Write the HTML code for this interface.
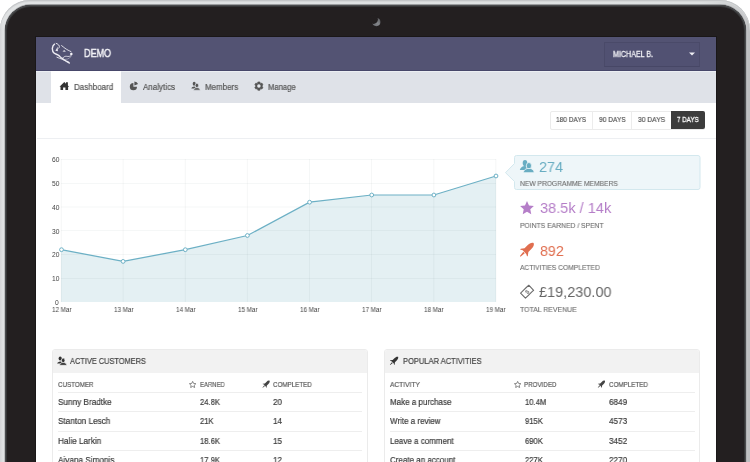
<!DOCTYPE html>
<html><head><meta charset="utf-8">
<style>
*{margin:0;padding:0;box-sizing:border-box}
html,body{width:750px;height:462px;overflow:hidden;background:#fff;font-family:"Liberation Sans",sans-serif}
.a{position:absolute}
.t{position:absolute;white-space:nowrap;line-height:1;transform-origin:0 0;will-change:transform;-webkit-text-stroke:0.2px currentColor}
#dev{left:0;top:0;width:750px;height:700px;border-radius:30px;background:linear-gradient(90deg,#d3d4d6 0,#e0e2e3 3px,#dde0e1 700px,#c8c9cb 746px,#bdbec0 748px);box-shadow:inset 0 1px 0 #c4c6c8,inset 0 2px 0 #d5d7d8}
#bez{left:5px;top:5px;width:741px;height:690px;border-radius:26px;background:#231f20;box-shadow:0 -0.5px 0 0.5px #9a9c9e,inset 0 0 0 1px #4a4b4d,inset 0 0 0 2px #343435}
#scr{left:36px;top:37px;width:680px;height:430px;background:#fff;box-shadow:0 0 0 1px #1a1718}
.nav{color:#555;font-size:8.8px}
.btn{color:#555;font-size:8.1px}
.yl{color:#444;font-size:6.7px;-webkit-text-stroke:0}
.xl{color:#444;font-size:6.7px;-webkit-text-stroke:0}
.big{font-size:15px;-webkit-text-stroke:0}
.lbl{color:#6e6e6e;font-size:7.3px;-webkit-text-stroke:0.12px currentColor}
.ph{color:#444;font-size:8.85px}
.th{color:#5a5a5a;font-size:7.8px}
.td{color:#3a3a3a;font-size:9.1px}
</style></head><body>
<div id="dev" class="a"></div>
<div id="bez" class="a"></div>
<svg class="a" style="left:370px;top:15px" width="14" height="14" viewBox="0 0 14 14"><defs><linearGradient id="cg" x1="0" y1="1" x2="1" y2="0"><stop offset="0" stop-color="#606268"/><stop offset="0.5" stop-color="#85878b"/><stop offset="1" stop-color="#56575a"/></linearGradient><filter id="cb" color-interpolation-filters="sRGB"><feGaussianBlur stdDeviation="0.6"/></filter></defs><g filter="url(#cb)"><circle cx="6.3" cy="7.1" r="4.1" fill="url(#cg)"/><circle cx="3.5" cy="4.5" r="4.4" fill="#231f20"/></g></svg>
<div id="scr" class="a"></div>

<!-- header -->
<div class="a" style="left:36px;top:37px;width:680px;height:34px;background:#535373;border-bottom:1px solid #47476a"></div>
<svg class="a" style="left:50px;top:42px" width="25" height="24" viewBox="0 0 25 24">
 <g fill="none" stroke="#ecebf2" stroke-linecap="round" stroke-linejoin="round">
  <path d="M4.5 2.2 C3.3 3 2.5 4.6 2.3 6.6 C2.3 8.6 2.9 10.2 4.2 11.2 C5.5 12 7.4 12.6 8.6 13.4 C9.6 14.1 10.6 15.3 12.1 16.4 C13.6 17.6 15.2 18.6 16.8 19.5 C17.8 20 18.6 20.4 19.3 21" stroke-width="1.4"/>
  <path d="M6.9 15.2 C8.4 15.8 10.5 16.8 12.1 17.2 C13.6 17.8 15 18.6 16.3 19.2" stroke-width="0.9"/>
  <path d="M6.2 1.4 C7.4 1.8 8.6 2.6 9.2 3.8 C9.6 4.8 9.3 5.6 8.7 6.2" stroke-width="1"/>
  <path d="M11.6 3.6 C12.8 4.5 13.9 5.4 14.9 6.2 C16 7 17 7.6 18.1 8.2 C19.1 8.7 20.1 9.1 21 9.6" stroke-width="0.9"/>
  <path d="M12.7 16.1 C13.3 15.3 14 14.7 14.8 14.5 C15.5 14.2 16.2 14.2 16.8 14.3 C17.5 14.4 18.2 14.6 19.2 14.4 C20.2 14.2 20.9 13.6 21.5 13" stroke-width="0.8"/>
  <path d="M15.4 17.4 C16.8 17.3 18.3 16.9 19.6 16 C20.4 15.4 20.8 14.8 21.1 14.2" stroke-width="0.6" stroke-opacity="0.7"/>
 </g>
 <path d="M7.6 4.8 L5.4 8.7 L7.9 9.2 Z" fill="#ecebf2"/>
 <path d="M12.5 9.6 L14.2 8.1 L15.9 9.7 Z" fill="#ecebf2"/>
 <circle cx="21.3" cy="12.1" r="1.25" fill="#f4f3f8"/>
</svg>
<div class="t" style="left:84px;top:47.8px;font-size:11.3px;font-weight:400;-webkit-text-stroke:0.5px #f2f2f6;color:#f2f2f6;transform:scaleX(0.80)">DEMO</div>
<div class="a" style="left:604.3px;top:42.3px;width:96px;height:24.7px;background:#515172;border:1px solid #4a4a69;border-bottom-color:#474766"></div>
<div class="t" style="left:613px;top:49.9px;font-size:8.4px;color:#eeeef3;-webkit-text-stroke:0.3px #eeeef3;transform:scaleX(0.85)">MICHAEL B.</div>
<svg class="a" style="left:689px;top:52px" width="6" height="4" viewBox="0 0 6 4"><path d="M0 0.5H6L3 3.5Z" fill="#eeeef3"/></svg>

<!-- nav -->
<div class="a" style="left:36px;top:71px;width:680px;height:31.5px;background:#dfe2e8;border-top:1px solid #eceff3"></div>
<div class="a" style="left:51.3px;top:71px;width:69.7px;height:32px;background:#fff"></div>
<svg class="a" style="left:56px;top:78px" width="18" height="16" viewBox="0 0 18 16"><path d="M3.5 8.7 L8.3 4.1 L10 5.7 L10 4.3 L11.9 4.3 L11.9 7.5 L13.2 8.7 L12.1 8.7 L12.1 11.9 L9.4 11.9 L9.4 9.6 L7.1 9.6 L7.1 11.9 L4.5 11.9 L4.5 8.7 Z" fill="#333"/></svg>
<div class="t nav" style="left:73.5px;top:82.9px;transform:scaleX(0.91)">Dashboard</div>
<svg class="a" style="left:125px;top:78px" width="18" height="16" viewBox="0 0 18 16"><path d="M8.4 8.7 L8.4 5.1 A3.6 3.6 0 1 0 12.0 8.7 Z" fill="#555"/><path d="M9.4 7.4 L9.40 3.50 A3.9 3.9 0 0 1 13.06 6.07 Z" fill="#555"/></svg>
<div class="t nav" style="left:143px;top:82.9px;transform:scaleX(0.91)">Analytics</div>
<svg class="a" style="left:186px;top:78px" width="18" height="16" viewBox="0 0 18 16">
 <ellipse cx="8.2" cy="5.7" rx="1.5" ry="2" fill="#555"/>
 <path d="M5.3 10.4 C5.6 9.3 6.8 8.6 8.4 8.5 L9.5 9 L9.5 10.4 Z" fill="#555"/>
 <g fill="#555" stroke="#dfe2e8" stroke-width="0.7">
 <ellipse cx="10.9" cy="7.4" rx="1.7" ry="2.2"/>
 <path d="M7.6 12.2 C7.8 10.6 9 9.8 10.3 9.7 L11.6 9.7 C12.9 9.8 14 10.6 14.2 12.2 Z"/>
 </g>
</svg>
<div class="t nav" style="left:205px;top:82.9px;transform:scaleX(0.905)">Members</div>
<svg class="a" style="left:250px;top:78px" width="18" height="16" viewBox="0 0 18 16"><g transform="translate(8.9 8.1)"><path d="M-1.04 -4.17 L1.04 -4.17 L1.35 -2.90 L1.84 -2.62 L3.09 -2.99 L4.13 -1.19 L3.19 -0.28 L3.19 0.28 L4.13 1.19 L3.09 2.99 L1.84 2.62 L1.35 2.90 L1.04 4.17 L-1.04 4.17 L-1.35 2.90 L-1.84 2.62 L-3.09 2.99 L-4.13 1.19 L-3.19 0.28 L-3.19 -0.28 L-4.13 -1.19 L-3.09 -2.99 L-1.84 -2.62 L-1.35 -2.90Z" fill="#555" stroke="#555" stroke-width="0.6" stroke-linejoin="round"/><circle r="1.75" fill="#e6e9ee"/></g></svg>
<div class="t nav" style="left:268.3px;top:82.9px;transform:scaleX(0.87)">Manage</div>

<!-- divider -->
<div class="a" style="left:37px;top:138px;width:679px;height:1px;background:#edeff2"></div>

<!-- day buttons -->
<div class="a" style="left:550px;top:110.5px;width:155px;height:19px;border:1px solid #ebebeb;border-radius:2px;background:#fff"></div>
<div class="a" style="left:592px;top:111px;width:1px;height:18px;background:#ececec"></div>
<div class="a" style="left:631px;top:111px;width:1px;height:18px;background:#ececec"></div>
<div class="a" style="left:671px;top:111px;width:34px;height:18px;background:#3c3c3c;border-radius:0 2px 2px 0"></div>
<div class="t btn" style="left:556.4px;top:115.7px;transform:scaleX(0.81)">180 DAYS</div>
<div class="t btn" style="left:599px;top:115.7px;transform:scaleX(0.82)">90 DAYS</div>
<div class="t btn" style="left:638px;top:115.7px;transform:scaleX(0.83)">30 DAYS</div>
<div class="t btn" style="left:677px;top:115.7px;color:#fff;font-weight:400;-webkit-text-stroke:0.3px #fff;transform:scaleX(0.77)">7 DAYS</div>

<!-- chart -->
<svg class="a" style="left:0;top:0" width="750" height="462">
 <path d="M61 249.7 L123.1 261.4 L185.3 249.7 L247.4 235.5 L309.6 202.2 L371.7 195 L433.9 195 L496 176 L496 302 L61 302 Z" fill="#e4f0f3"/>
 <g stroke="rgba(0,40,60,0.04)" stroke-width="1">
  <path d="M61 159.5H496M61 183.5H496M61 207H496M61 230.5H496M61 254.5H496M61 278.5H496"/>
  <path d="M61.3 159V302M123.2 159V302M185.3 159V302M247.4 159V302M309.5 159V302M371.6 159V302M433.8 159V302M495.8 159V302"/>
 </g>
 <path d="M61 249.7 L123.1 261.4 L185.3 249.7 L247.4 235.5 L309.6 202.2 L371.7 195 L433.9 195 L496 176" fill="none" stroke="#6cb0c5" stroke-width="1.2"/>
 <g fill="#fff" stroke="#6cb0c5" stroke-width="1">
  <circle cx="61.5" cy="249.7" r="1.9"/><circle cx="123.1" cy="261.4" r="1.9"/><circle cx="185.3" cy="249.7" r="1.9"/><circle cx="247.4" cy="235.5" r="1.9"/><circle cx="309.6" cy="202.2" r="1.9"/><circle cx="371.7" cy="195" r="1.9"/><circle cx="433.9" cy="195" r="1.9"/><circle cx="496" cy="176" r="1.9"/>
 </g>
</svg>
<div class="t yl" style="left:51.5px;top:157.4px">60</div>
<div class="t yl" style="left:51.5px;top:181.2px">50</div>
<div class="t yl" style="left:51.5px;top:204.9px">40</div>
<div class="t yl" style="left:51.5px;top:228.7px">30</div>
<div class="t yl" style="left:51.5px;top:252.4px">20</div>
<div class="t yl" style="left:51.5px;top:276.2px">10</div>
<div class="t yl" style="left:54.5px;top:299.9px">0</div>
<div class="t xl" style="left:51.6px;top:307.2px;transform:scaleX(0.94)">12 Mar</div>
<div class="t xl" style="left:113.6px;top:307.2px;transform:scaleX(0.94)">13 Mar</div>
<div class="t xl" style="left:175.6px;top:307.2px;transform:scaleX(0.94)">14 Mar</div>
<div class="t xl" style="left:237.6px;top:307.2px;transform:scaleX(0.94)">15 Mar</div>
<div class="t xl" style="left:299.6px;top:307.2px;transform:scaleX(0.94)">16 Mar</div>
<div class="t xl" style="left:361.6px;top:307.2px;transform:scaleX(0.94)">17 Mar</div>
<div class="t xl" style="left:423.6px;top:307.2px;transform:scaleX(0.94)">18 Mar</div>
<div class="t xl" style="left:485.6px;top:307.2px;transform:scaleX(0.94)">19 Mar</div>

<!-- callout -->
<svg class="a" style="left:504px;top:154px" width="198" height="38" viewBox="0 0 198 38">
 <path d="M12.5 1.5 H194 A2 2 0 0 1 196 3.5 V33.5 A2 2 0 0 1 194 35.5 H12.5 A2 2 0 0 1 10.5 33.5 V27.5 L1.5 18.7 L10.5 9.5 V3.5 A2 2 0 0 1 12.5 1.5 Z" fill="#eef6f9" stroke="#d3e8ee" stroke-width="1"/>
</svg>
<svg class="a" style="left:517px;top:157px" width="20" height="18" viewBox="0 0 20 18">
 <ellipse cx="8" cy="6" rx="2.3" ry="3.1" fill="#68adc2"/>
 <path d="M2.8 13.1 C3.1 11 4.9 9.5 7.3 9 L9.8 9.2 L9.8 13.1 Z" fill="#68adc2"/>
 <g fill="#68adc2" stroke="#eef6f9" stroke-width="0.8">
 <ellipse cx="11.9" cy="8.8" rx="2.6" ry="3.3"/>
 <path d="M6.3 15.7 C6.5 13.3 8.4 11.9 10.4 11.5 L13.4 11.5 C15.4 11.9 17 13.3 17.2 15.7 Z"/>
 </g>
</svg>
<div class="t big" style="left:539px;top:159.2px;color:#68adc2;transform:scaleX(0.96)">274</div>
<div class="t lbl" style="left:520px;top:180.1px;transform:scaleX(0.918)">NEW PROGRAMME MEMBERS</div>

<svg class="a" style="left:520px;top:201px" width="14" height="14" viewBox="0.4 0.4 13.2 13.2"><path d="M7 0.5 L8.9 4.6 L13.5 5.1 L10.1 8.2 L11 12.8 L7 10.5 L3 12.8 L3.9 8.2 L0.5 5.1 L5.1 4.6 Z" fill="#b57ec8"/></svg>
<div class="t big" style="left:539.5px;top:200.4px;color:#b57ec8;transform:scaleX(0.97)">38.5k / 14k</div>
<div class="t lbl" style="left:520px;top:222px;transform:scaleX(0.929)">POINTS EARNED / SPENT</div>

<svg class="a" style="left:517px;top:240px" width="20" height="18" viewBox="0 0 20 18"><g transform="translate(10.3 9.3) rotate(45)" fill="#e06e4f"><path d="M0 -9 C2 -8 2.7 -6 2.7 -3 L2.7 1.2 L5 4.2 L5 5.3 L2.5 4 L-2.5 4 L-5 5.3 L-5 4.2 L-2.7 1.2 L-2.7 -3 C-2.7 -6 -2 -8 0 -9 Z M-1 4.6 L1 4.6 L0.4 10 L-0.4 10 Z"/></g></svg>
<div class="t big" style="left:539.8px;top:243.4px;color:#e06e4f;transform:scaleX(0.95)">892</div>
<div class="t lbl" style="left:520px;top:264px;transform:scaleX(0.915)">ACTIVITIES COMPLETED</div>

<svg class="a" style="left:517px;top:282px" width="20" height="18" viewBox="0 0 20 18"><g transform="translate(10.1 9.7) rotate(-44)"><path d="M-5.7 -3.5 C-3 -3.1 0 -3.9 5.7 -3.5 L5.7 3.5 C3 3.1 0 3.9 -5.7 3.5 Z" fill="none" stroke="#6a6a6a" stroke-width="1.1" stroke-linejoin="round"/><text x="0" y="2.2" font-size="6" fill="#7a7a7a" text-anchor="middle" font-family="Liberation Sans" font-weight="700">$</text></g></svg>
<div class="t big" style="left:539.4px;top:284.2px;color:#666;transform:scaleX(0.965)">£19,230.00</div>
<div class="t lbl" style="left:520px;top:305.8px;transform:scaleX(0.948)">TOTAL REVENUE</div>

<!-- panel 1 -->
<div class="a" style="left:52px;top:349px;width:316px;height:120px;border:1px solid #ebebeb;border-radius:3px;background:#fff"></div>
<div class="a" style="left:53px;top:350px;width:314px;height:23px;background:#f2f2f2;border-radius:2px 2px 0 0"></div>
<svg class="a" style="left:52px;top:351px" width="18" height="16" viewBox="0 0 18 16">
 <ellipse cx="8.2" cy="7.5" rx="1.6" ry="2.1" fill="#333"/>
 <path d="M5.1 12.6 C5.4 11.4 6.7 10.6 8.4 10.5 L9.6 11 L9.6 12.6 Z" fill="#333"/>
 <g fill="#333" stroke="#f2f2f2" stroke-width="0.7">
 <ellipse cx="11.2" cy="9.4" rx="1.8" ry="2.3"/>
 <path d="M7.6 14.3 C7.8 12.6 9.1 11.7 10.5 11.6 L11.9 11.6 C13.3 11.7 14.6 12.6 14.8 14.3 Z"/>
 </g>
</svg>
<div class="t ph" style="left:70px;top:357.1px;transform:scaleX(0.837)">ACTIVE CUSTOMERS</div>
<div class="t th" style="left:58px;top:380.7px;transform:scaleX(0.80)">CUSTOMER</div>
<svg class="a" style="left:189px;top:380.5px" width="7.3" height="7.3" viewBox="0 0 14 14"><path d="M7 0.8 L8.9 4.7 L13.2 5.2 L10 8.2 L10.8 12.5 L7 10.4 L3.2 12.5 L4 8.2 L0.8 5.2 L5.1 4.7 Z" fill="none" stroke="#555" stroke-width="1.3"/></svg>
<div class="t th" style="left:200px;top:380.7px;transform:scaleX(0.763)">EARNED</div>
<svg class="a" style="left:0;top:0;overflow:visible" width="1" height="1"><g transform="translate(266.3 384.0) scale(0.52) rotate(45)" fill="#444"><path d="M0 -9 C2 -8 2.7 -6 2.7 -3 L2.7 1.2 L5 4.2 L5 5.3 L2.5 4 L-2.5 4 L-5 5.3 L-5 4.2 L-2.7 1.2 L-2.7 -3 C-2.7 -6 -2 -8 0 -9 Z M-1 4.6 L1 4.6 L0.4 10 L-0.4 10 Z"/></g></svg>
<div class="t th" style="left:272.8px;top:380.7px;transform:scaleX(0.797)">COMPLETED</div>
<div class="a" style="left:58px;top:392px;width:304px;height:1px;background:#eeeeee"></div>
<div class="a" style="left:58px;top:411px;width:304px;height:1px;background:#eeeeee"></div>
<div class="a" style="left:58px;top:431px;width:304px;height:1px;background:#eeeeee"></div>
<div class="a" style="left:58px;top:450px;width:304px;height:1px;background:#eeeeee"></div>
<div class="t td" style="left:58px;top:397.9px;transform:scaleX(0.9)">Sunny Bradtke</div>
<div class="t td" style="left:58px;top:417.2px;transform:scaleX(0.9)">Stanton Lesch</div>
<div class="t td" style="left:58px;top:436.5px;transform:scaleX(0.9)">Halie Larkin</div>
<div class="t td" style="left:58px;top:455.7px;transform:scaleX(0.9)">Aiyana Simonis</div>
<div class="t td" style="left:200px;top:397.9px;transform:scaleX(0.84)">24.8K</div>
<div class="t td" style="left:200px;top:417.2px;transform:scaleX(0.84)">21K</div>
<div class="t td" style="left:200px;top:436.5px;transform:scaleX(0.84)">18.6K</div>
<div class="t td" style="left:200px;top:455.7px;transform:scaleX(0.84)">17.9K</div>
<div class="t td" style="left:273px;top:397.9px;transform:scaleX(0.9)">20</div>
<div class="t td" style="left:273px;top:417.2px;transform:scaleX(0.9)">14</div>
<div class="t td" style="left:273px;top:436.5px;transform:scaleX(0.9)">15</div>
<div class="t td" style="left:273px;top:455.7px;transform:scaleX(0.9)">12</div>

<!-- panel 2 -->
<div class="a" style="left:384px;top:349px;width:316px;height:120px;border:1px solid #ebebeb;border-radius:3px;background:#fff"></div>
<div class="a" style="left:385px;top:350px;width:314px;height:23px;background:#f2f2f2;border-radius:2px 2px 0 0"></div>
<svg class="a" style="left:0;top:0;overflow:visible" width="1" height="1"><g transform="translate(394.3 360.6) scale(0.6) rotate(45)" fill="#333"><path d="M0 -9 C2 -8 2.7 -6 2.7 -3 L2.7 1.2 L5 4.2 L5 5.3 L2.5 4 L-2.5 4 L-5 5.3 L-5 4.2 L-2.7 1.2 L-2.7 -3 C-2.7 -6 -2 -8 0 -9 Z M-1 4.6 L1 4.6 L0.4 10 L-0.4 10 Z"/></g></svg>
<div class="t ph" style="left:402.5px;top:357.1px;transform:scaleX(0.851)">POPULAR ACTIVITIES</div>
<div class="t th" style="left:390.2px;top:380.7px;transform:scaleX(0.85)">ACTIVITY</div>
<svg class="a" style="left:514px;top:380.5px" width="7.3" height="7.3" viewBox="0 0 14 14"><path d="M7 0.8 L8.9 4.7 L13.2 5.2 L10 8.2 L10.8 12.5 L7 10.4 L3.2 12.5 L4 8.2 L0.8 5.2 L5.1 4.7 Z" fill="none" stroke="#555" stroke-width="1.3"/></svg>
<div class="t th" style="left:524.4px;top:380.7px;transform:scaleX(0.795)">PROVIDED</div>
<svg class="a" style="left:0;top:0;overflow:visible" width="1" height="1"><g transform="translate(601.6 384.0) scale(0.52) rotate(45)" fill="#444"><path d="M0 -9 C2 -8 2.7 -6 2.7 -3 L2.7 1.2 L5 4.2 L5 5.3 L2.5 4 L-2.5 4 L-5 5.3 L-5 4.2 L-2.7 1.2 L-2.7 -3 C-2.7 -6 -2 -8 0 -9 Z M-1 4.6 L1 4.6 L0.4 10 L-0.4 10 Z"/></g></svg>
<div class="t th" style="left:608.5px;top:380.7px;transform:scaleX(0.80)">COMPLETED</div>
<div class="a" style="left:390px;top:392px;width:305px;height:1px;background:#eeeeee"></div>
<div class="a" style="left:390px;top:411px;width:305px;height:1px;background:#eeeeee"></div>
<div class="a" style="left:390px;top:431px;width:305px;height:1px;background:#eeeeee"></div>
<div class="a" style="left:390px;top:450px;width:305px;height:1px;background:#eeeeee"></div>
<div class="t td" style="left:390px;top:397.9px;transform:scaleX(0.88)">Make a purchase</div>
<div class="t td" style="left:390px;top:417.2px;transform:scaleX(0.88)">Write a review</div>
<div class="t td" style="left:390px;top:436.5px;transform:scaleX(0.88)">Leave a comment</div>
<div class="t td" style="left:390px;top:455.7px;transform:scaleX(0.88)">Create an account</div>
<div class="t td" style="left:524.6px;top:397.9px;transform:scaleX(0.84)">10.4M</div>
<div class="t td" style="left:524.6px;top:417.2px;transform:scaleX(0.84)">915K</div>
<div class="t td" style="left:524.6px;top:436.5px;transform:scaleX(0.84)">690K</div>
<div class="t td" style="left:524.6px;top:455.7px;transform:scaleX(0.84)">227K</div>
<div class="t td" style="left:608.6px;top:397.9px;transform:scaleX(0.9)">6849</div>
<div class="t td" style="left:608.6px;top:417.2px;transform:scaleX(0.9)">4573</div>
<div class="t td" style="left:608.6px;top:436.5px;transform:scaleX(0.9)">3452</div>
<div class="t td" style="left:608.6px;top:455.7px;transform:scaleX(0.9)">2270</div>
</body></html>
